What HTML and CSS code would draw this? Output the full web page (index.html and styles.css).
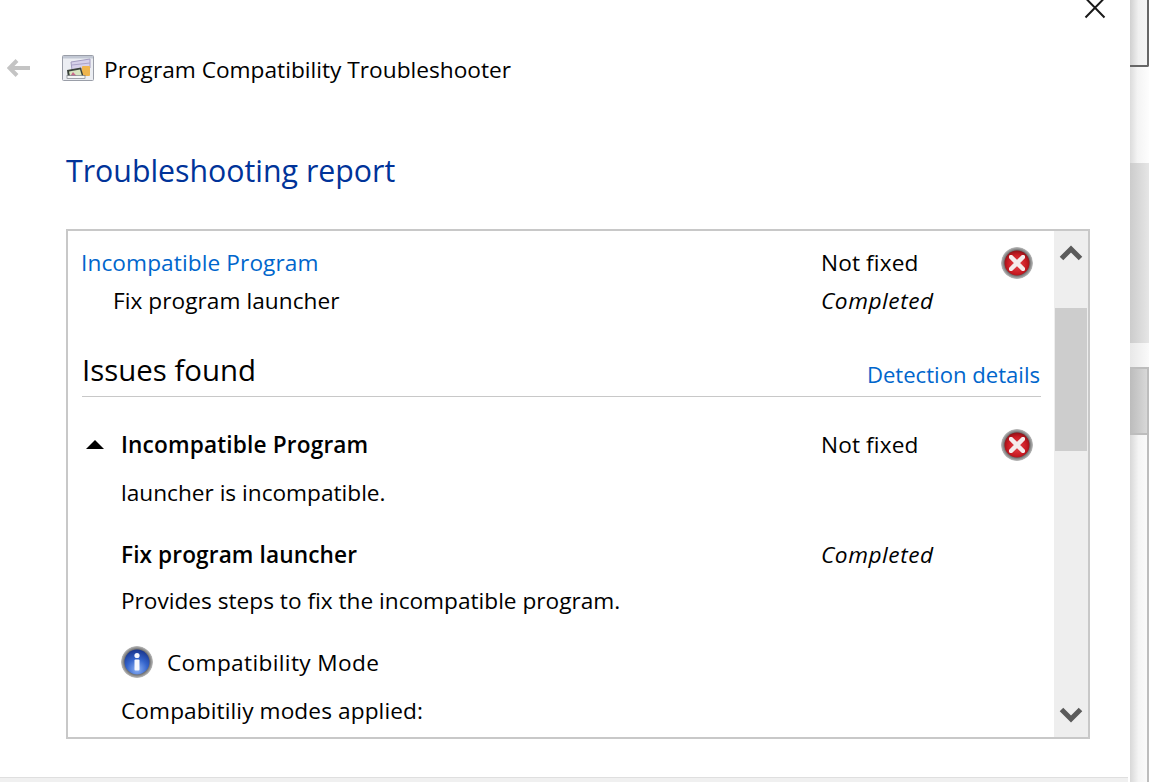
FILE: index.html
```html
<!DOCTYPE html>
<html lang="en">
<head>
<meta charset="utf-8">
<title>Program Compatibility Troubleshooter</title>
<link rel="stylesheet" href="styles.css">
</head>
<body>
<svg class="defs" width="0" height="0" aria-hidden="true">
  <defs>
    <radialGradient id="ring" cx="50%" cy="50%" r="50%">
      <stop offset="0.7" stop-color="#4f4f4f"/>
      <stop offset="0.86" stop-color="#8a8a8a"/>
      <stop offset="0.97" stop-color="#b4b4b4"/>
      <stop offset="1" stop-color="#dcdcdc"/>
    </radialGradient>
    <radialGradient id="red" cx="50%" cy="55%" r="55%">
      <stop offset="0" stop-color="#e8474d"/>
      <stop offset="0.7" stop-color="#c81a22"/>
      <stop offset="1" stop-color="#8e1218"/>
    </radialGradient>
    <radialGradient id="blue" cx="50%" cy="80%" r="75%">
      <stop offset="0" stop-color="#8db2f5"/>
      <stop offset="0.55" stop-color="#3565cc"/>
      <stop offset="1" stop-color="#1c3a94"/>
    </radialGradient>
    <filter id="soft"><feGaussianBlur stdDeviation=".6"/></filter>
    <g id="err">
      <circle cx="16" cy="16" r="16" fill="url(#ring)"/>
      <circle cx="16" cy="16" r="12.500" fill="url(#red)"/>
      <path d="M10 10 22 22M22 10 10 22" stroke="#f4ecec" stroke-width="4.500" stroke-linecap="round" filter="url(#soft)"/>
    </g>
  </defs>
</svg>
<div class="screen">
  <main class="window">
    <div class="closebar">
      <svg class="close" width="22" height="19" viewBox="0 0 22 19"><path d="M1.5-2 20.5 17.5M20.5-2 1.500 17.500" stroke="#1a1a1a" stroke-width="2" fill="none"/></svg>
    </div>
    <header class="head">
      <svg class="back" width="24" height="18" viewBox="0 0 24 18"><path d="M10 1.500 2.500 9 10 16.500M3 9H23" stroke="#c4c4c4" stroke-width="4" fill="none"/></svg>
      <svg class="appicon" width="32" height="26" viewBox="0 0 32 26">
        <rect x=".5" y=".5" width="31" height="25" rx="1" fill="#eceef3" stroke="#9a9ea8"/>
        <rect x="1" y="1" width="30" height="2.500" fill="#c2c8d4"/>
        <path d="M9 7 28 4V13L10 15Z" fill="#d6d0ea" stroke="#a39cc0"/>
        <path d="M10 10 28 8" stroke="#aaa3c8"/>
        <rect x="20" y="11" width="8" height="10" rx="1" fill="#efb54e"/>
        <path d="M5 15 19 12.500 22 23H6Z" fill="#39413a"/>
        <path d="M7 16.500 18 14.500 20 21H8Z" fill="#d8e6c0"/>
        <path d="M8 21.500 11 17 15 21.500Z" fill="#c9688a"/>
        <rect x="5" y="20.500" width="18" height="3" fill="#f6f6f6" stroke="#6c7178" stroke-width=".6"/>
      </svg>
      <span class="apptitle">Program Compatibility Troubleshooter</span>
    </header>
    <h1 class="report">Troubleshooting report</h1>
    <section class="box">
      <div class="content">
        <div class="row row-sum1">
          <a class="link name">Incompatible Program</a>
          <span class="status">Not fixed</span>
          <svg class="st-icon" width="32" height="32" viewBox="0 0 32 32"><use href="#err"/></svg>
        </div>
        <div class="row row-sum2">
          <span class="name indent">Fix program launcher</span>
          <em class="status">Completed</em>
        </div>
        <div class="issues">
          <h2 class="issues-title">Issues found</h2>
          <a class="link details">Detection details</a>
        </div>
        <div class="row row-issue">
          <span class="name with-caret"><span class="caret"></span><strong>Incompatible Program</strong></span>
          <span class="status">Not fixed</span>
          <svg class="st-icon" width="32" height="32" viewBox="0 0 32 32"><use href="#err"/></svg>
        </div>
        <p class="para p1">launcher is incompatible.</p>
        <div class="row row-fix">
          <strong class="name body-left">Fix program launcher</strong>
          <em class="status">Completed</em>
        </div>
        <p class="para p2">Provides steps to fix the incompatible program.</p>
        <div class="info">
          <svg width="32" height="32" viewBox="0 0 32 32">
            <circle cx="16" cy="16" r="16" fill="url(#ring)"/>
            <circle cx="16" cy="16" r="12.500" fill="url(#blue)"/>
            <g filter="url(#soft)">
              <circle cx="16" cy="9.500" r="2.600" fill="#f6f8fd"/>
              <rect x="13.500" y="13.500" width="5" height="11" rx="1" fill="#f6f8fd"/>
            </g>
          </svg>
          <span class="info-text">Compatibility Mode</span>
        </div>
        <p class="para p3">Compabitiliy modes applied:</p>
      </div>
      <div class="scrollbar">
        <svg class="arrow" width="24" height="18" viewBox="0 0 24 18"><path d="M2.500 15.500 12 6 21.500 15.500" stroke="#5b5b5b" stroke-width="5" fill="none"/></svg>
        <div class="thumb-track"><div class="thumb"></div></div>
        <svg class="arrow" width="24" height="18" viewBox="0 0 24 18"><path d="M2.500 3.500 12 13 21.500 3.500" stroke="#5b5b5b" stroke-width="5" fill="none"/></svg>
      </div>
    </section>
    <footer class="foot"></footer>
  </main>
  <aside class="behind">
    <div class="seg seg-a"></div>
    <div class="seg seg-b"></div>
    <div class="seg seg-c"></div>
    <div class="seg seg-d"></div>
    <div class="seg seg-e"></div>
    <div class="seg seg-f"></div>
  </aside>
</div>
</body>
</html>
```
FILE: styles.css
```css
* { box-sizing: border-box; }
html, body { margin: 0; padding: 0; background: #fff; }
body {
  font-family: "Open Sans", "Noto Sans", sans-serif;
  color: #000;
  overflow: hidden;
}
.defs { display: block; height: 0; }
.screen { display: flex; width: 1173px; height: 782px; }
.window { width: 1130px; height: 782px; display: flex; flex-direction: column; background: #fff; }
.closebar { height: 19px; display: flex; justify-content: flex-end; padding-right: 24px; }
.head { height: 28px; margin-top: 37px; display: flex; align-items: center; padding-left: 7px; }
.back { flex: none; margin-bottom: 4px; }
.appicon { flex: none; margin-left: 31px; margin-bottom: 5px; }
.apptitle { margin-left: 10px; font-size: 22.700px; line-height: 28px; white-space: nowrap; }
.report {
  margin: 67px 0 0 66px;
  font-size: 30.300px;
  line-height: 40px;
  font-weight: 400;
  color: #003399;
}
.box {
  margin: 38px 0 0 66px;
  width: 1024px;
  height: 510px;
  border: 2px solid #c8c8c8;
  display: flex;
}
.content { width: 986px; padding: 12px 13px 0 13px; font-size: 22.650px; }
.row { display: grid; grid-template-columns: 740px 180px 32px; align-items: center; height: 38px; }
.st-icon { margin-top: 2px; }
.status { font-style: normal; white-space: nowrap; letter-spacing: .12px; }
em.status { font-style: italic; letter-spacing: .55px; }
.link { color: #0066cc; white-space: nowrap; }
.name { white-space: nowrap; }
.row-sum1 .link { letter-spacing: .1px; }
.indent { padding-left: 32px; letter-spacing: .05px; }
.issues {
  margin-top: 22px;
  height: 56px;
  width: 959px;
  margin-left: 1px;
  border-bottom: 1px solid #c8c8c8;
  display: flex;
  justify-content: space-between;
  align-items: flex-end;
}
.issues-title { margin: 0 0 5px; font-size: 29.400px; line-height: 42px; font-weight: 400; }
.details { margin-bottom: 7px; padding-right: 1px; font-size: 22.100px; }
.row-issue { margin-top: 28px; }
.with-caret { display: flex; align-items: center; }
.caret {
  width: 0; height: 0;
  margin: 0 17px 0 5px;
  border-left: 9px solid transparent;
  border-right: 9px solid transparent;
  border-bottom: 9px solid #000;
}
.with-caret strong, .body-left { font-weight: 600; }
.with-caret strong { letter-spacing: .15px; }
.body-left { padding-left: 40px; letter-spacing: .1px; }
.para { margin: 0 0 0 40px; line-height: 38px; white-space: nowrap; }
.p1 { margin-top: 11px; }
.row-fix { margin-top: 23px; }
.p2 { margin-top: 9px; }
.info { margin: 25px 0 0 40px; height: 34px; display: flex; align-items: center; gap: 14px; }
.info-text { letter-spacing: .35px; }
.p3 { margin-top: 13px; letter-spacing: .1px; }
.scrollbar {
  width: 34px;
  background: #eeeeee;
  display: flex;
  flex-direction: column;
  align-items: center;
  padding: 12px 0 13px;
}
.arrow { flex: none; }
.thumb-track { flex: 1; width: 100%; padding: 47px 1px 0; }
.thumb { height: 143px; background: #cdcdcd; }
.foot { margin-top: auto; height: 5px; width: 1128px; background: #f0f0f0; border-top: 1px solid #dfdfdf; }
.behind { width: 19px; height: 782px; display: flex; flex-direction: column; }
.seg-a { height: 67px; border-right: 2px solid #666; border-bottom: 2px solid #666; border-bottom-right-radius: 2px; background: linear-gradient(90deg, #d0d0d0, #f0f0f0 50%, #f4f4f4); }
.seg-b { height: 96px; background: linear-gradient(90deg, #dcdcdc, #f4f4f4 40%, #fdfdfd); }
.seg-c { height: 180px; background: linear-gradient(90deg, #cccccc, #e6e6e6); }
.seg-d { height: 24px; background: linear-gradient(90deg, #e8e8e8, #fafafa); }
.seg-e { height: 68px; border-top: 2px solid #bdbdbd; border-right: 2px solid #bdbdbd; border-bottom: 2px solid #bdbdbd; background: linear-gradient(90deg, #bcbcbc, #d8d8d8); }
.seg-f { flex: 1; border-right: 2px solid #bdbdbd; background: linear-gradient(90deg, #d8d8d8, #f4f4f4 50%, #fafafa); }
```
